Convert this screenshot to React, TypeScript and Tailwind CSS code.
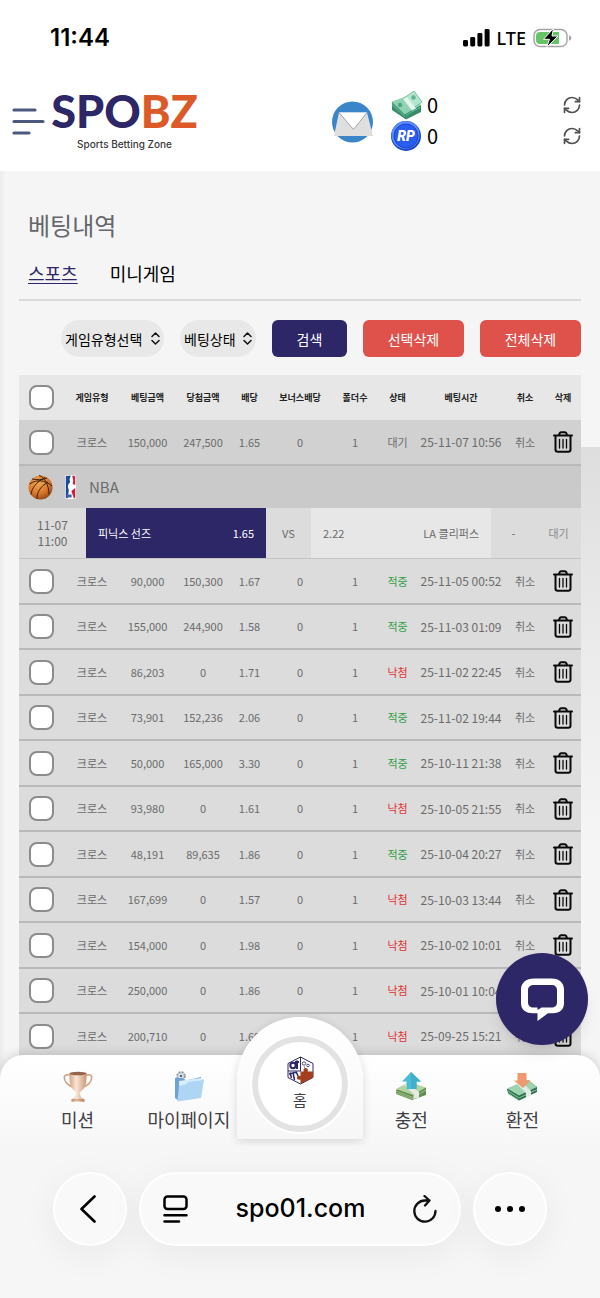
import type { ReactNode } from 'react';
import { RefreshCw } from 'lucide-react';

type Bet = {
  stake: string;
  payout: string;
  odds: string;
  status: '대기' | '적중' | '낙첨';
  time: string;
};

const pendingBet: Bet = { stake: '150,000', payout: '247,500', odds: '1.65', status: '대기', time: '25-11-07 10:56' };

const bets: Bet[] = [
  { stake: '90,000', payout: '150,300', odds: '1.67', status: '적중', time: '25-11-05 00:52' },
  { stake: '155,000', payout: '244,900', odds: '1.58', status: '적중', time: '25-11-03 01:09' },
  { stake: '86,203', payout: '0', odds: '1.71', status: '낙첨', time: '25-11-02 22:45' },
  { stake: '73,901', payout: '152,236', odds: '2.06', status: '적중', time: '25-11-02 19:44' },
  { stake: '50,000', payout: '165,000', odds: '3.30', status: '적중', time: '25-10-11 21:38' },
  { stake: '93,980', payout: '0', odds: '1.61', status: '낙첨', time: '25-10-05 21:55' },
  { stake: '48,191', payout: '89,635', odds: '1.86', status: '적중', time: '25-10-04 20:27' },
  { stake: '167,699', payout: '0', odds: '1.57', status: '낙첨', time: '25-10-03 13:44' },
  { stake: '154,000', payout: '0', odds: '1.98', status: '낙첨', time: '25-10-02 10:01' },
  { stake: '250,000', payout: '0', odds: '1.86', status: '낙첨', time: '25-10-01 10:04' },
  { stake: '200,710', payout: '0', odds: '1.69', status: '낙첨', time: '25-09-25 15:21' },
];

const columns = [
  { title: '게임유형', width: 'w-[56px]' },
  { title: '베팅금액', width: 'w-[55px]' },
  { title: '당첨금액', width: 'w-[56px]' },
  { title: '배당', width: 'w-[37px]' },
  { title: '보너스배당', width: 'w-[64px]' },
  { title: '폴더수', width: 'w-[46px]' },
  { title: '상태', width: 'w-[39px]' },
  { title: '베팅시간', width: 'w-[88px]' },
  { title: '취소', width: 'w-[40px]' },
  { title: '삭제', width: 'w-[36px]' },
];

const statusColor = {
  대기: 'text-[#6b6b6b]',
  적중: 'text-[#2f9e44]',
  낙첨: 'text-[#e03131]',
};

function StatusBar() {
  return (
    <div className="flex h-[72px] shrink-0 items-center justify-between bg-white pt-1 pr-7 pl-[50px] text-black">
      <span className="font-[Inter] text-2xl font-semibold">11:44</span>
      <div className="flex items-center gap-[7px]">
        <svg className="h-[18px] w-[27px]" viewBox="0 0 27 18">
          <rect x="0" y="11" width="5" height="6.5" rx="1.4" />
          <rect x="7.2" y="8" width="5" height="9.5" rx="1.4" />
          <rect x="14.4" y="4" width="5" height="13.5" rx="1.4" />
          <rect x="21.6" y="0" width="5" height="17.5" rx="1.4" />
        </svg>
        <span className="font-['Noto_Sans'] text-lg font-medium">LTE</span>
        <svg className="h-5 w-[39px]" viewBox="0 0 39 20">
          <rect x="1" y="1.5" width="33" height="17" rx="6" fill="#fff" stroke="#a3a3a3" strokeWidth="1.4" />
          <path d="M7 4h19v12H7a4 4 0 0 1-4-4V8a4 4 0 0 1 4-4z" fill="#65c466" />
          <path d="M36 7.2c1.8.6 2.3 1.6 2.3 2.8s-.5 2.200-2.300 2.800z" fill="#a3a3a3" />
          <path d="M20.500.3 10.500 11.300h6l-3 8.400L25 8h-6z" stroke="#fff" strokeWidth="1" />
        </svg>
      </div>
    </div>
  );
}

function MailIcon() {
  return (
    <svg className="h-[42px] w-[42px]" viewBox="0 0 42 42">
      <circle cx="20.500" cy="21" r="20.500" fill="#3a86c8" />
      <path d="M7 11.500h28l6 23.500H2z" fill="#dfdfdf" />
      <path d="M7 11.500h28L21.500 28.500z" fill="#fff" />
      <path d="M7 11.500 21.500 28.500 35 11.500" fill="none" stroke="#8f8f8f" strokeWidth=".8" />
    </svg>
  );
}

function CashIcon() {
  return (
    <svg className="h-[30px] w-8" viewBox="0 0 32 30">
      <path d="M1 15 15 27 30 17v5L15 29.500 1 20z" fill="#3b8a6b" />
      <path d="M1 11.500 19 5 30 15 14 24z" fill="#8fd3b4" />
      <path d="M1 11.500 14 24v3.500L1 16z" fill="#4da682" />
      <path d="M14 24 30 15v4l-16 8.500z" fill="#2f8f67" />
      <path d="m13 8 10-7 8 11-10 7z" fill="#b3e6cd" stroke="#58ad89" strokeWidth=".7" />
      <path d="m12 9 4-2 9 11.500-4 2z" fill="#e3f5ec" />
      <circle cx="22.500" cy="7.500" r="2.200" fill="#5fb591" />
      <circle cx="9" cy="15" r="2.200" fill="#4ea682" />
      <path d="m15 25 14-7.500" stroke="#69bf9a" strokeWidth="1" />
    </svg>
  );
}

function CoinIcon() {
  return (
    <svg className="h-[30px] w-[30px]" viewBox="0 0 30 30">
      <circle cx="15" cy="15" r="15" fill="#1747c9" />
      <circle cx="14.500" cy="14" r="14" fill="#5b8cff" />
      <circle cx="15" cy="15" r="12" fill="#2a5cf0" stroke="#1c45c4" strokeWidth="1" />
      <text x="15" y="20" textAnchor="middle" fontSize="14" fontWeight="900" fontStyle="italic" fontFamily="Roboto, sans-serif" fill="#fff">
        RP
      </text>
    </svg>
  );
}

function Balance({ icon, label }: { icon: ReactNode; label: string }) {
  return (
    <div className="flex h-[31px] items-center">
      <span className="w-9">{icon}</span>
      <span className="flex-1 text-xl text-black">0</span>
      <button aria-label={label}>
        <RefreshCw className="h-5 w-5 text-[#505050]" strokeWidth={2} />
      </button>
    </div>
  );
}

function SiteHeader() {
  return (
    <header className="flex h-[99px] shrink-0 items-start bg-white pr-[18px] pl-3">
      <button aria-label="메뉴" className="mt-9 mr-2">
        <svg className="h-7 w-[33px]" viewBox="0 0 33 28" stroke="#4d587f" strokeWidth="3.200" strokeLinecap="round">
          <path d="M2 2h21M2 13.500h29M2 25h15" />
        </svg>
      </button>
      <a href="#home" className="flex w-[143px] flex-col items-center pt-3">
        <span className="font-[Lato] text-[45px] leading-[54px] font-black text-[#2d2667]">
          SPO<span className="text-[#dc5a28]">BZ</span>
        </span>
        <span className="font-[Inter] text-[10px] leading-3 font-medium text-[#3a3a3a]">Sports Betting Zone</span>
      </a>
      <div className="ml-auto flex w-[250px] items-start pt-[17px]">
        <button aria-label="쪽지" className="mt-3 mr-[17px]">
          <MailIcon />
        </button>
        <div className="flex-1">
          <Balance icon={<CashIcon />} label="캐시 새로고침" />
          <Balance icon={<CoinIcon />} label="포인트 새로고침" />
        </div>
      </div>
    </header>
  );
}

function FilterSelect({ label, className }: { label: string; className: string }) {
  return (
    <div className={`relative ${className}`}>
      <select aria-label={label} className="h-full w-full appearance-none rounded-full bg-[#e8e8e8] pl-1 text-sm text-black">
        <option>{label}</option>
      </select>
      <svg className="pointer-events-none absolute top-3 right-1 h-[13px] w-[9px]" viewBox="0 0 9 13" fill="none" stroke="#111" strokeWidth="1.500" strokeLinecap="round" strokeLinejoin="round">
        <path d="M1 4.500 4.500 1 8 4.500M1 8.500 4.500 12 8 8.500" />
      </svg>
    </div>
  );
}

function CheckBox({ label }: { label: string }) {
  return (
    <input
      type="checkbox"
      aria-label={label}
      className="mx-auto block h-[25px] w-[25px] appearance-none rounded-lg border-2 border-[#8c8c8c] bg-white"
    />
  );
}

function TrashIcon() {
  return (
    <svg className="h-[22px] w-5" viewBox="0 0 20 22" fill="none" stroke="#0a0a0a" strokeWidth="2" strokeLinecap="round" strokeLinejoin="round">
      <path d="M1 4.500h18M2.500 5v13.500c0 1.500.8 2.300 2.200 2.300h10.600c1.400 0 2.200-.8 2.200-2.300V5M6 4.300c.3-2 .8-3 2.300-3h3.400c1.500 0 2 1 2.300 3" />
      <path d="M6.500 8.500v8.500M10 8.500v8.500M13.500 8.500v8.500" strokeWidth="1.300" />
    </svg>
  );
}

function BetRow({ bet, className }: { bet: Bet; className: string }) {
  const cells = ['크로스', bet.stake, bet.payout, bet.odds, '0', '1'];

  return (
    <tr className={`${className} text-[11px] text-[#6b6b6b]`}>
      <td className="border-b-2 border-[#b9b9b9]">
        <CheckBox label={`${bet.time} 선택`} />
      </td>
      {cells.map((cell, i) => (
        <td key={i} className="border-b-2 border-[#b9b9b9]">{cell}</td>
      ))}
      <td className={`border-b-2 border-[#b9b9b9] ${statusColor[bet.status]}`}>{bet.status}</td>
      <td className="border-b-2 border-[#b9b9b9] text-xs whitespace-nowrap">{bet.time}</td>
      <td className="border-b-2 border-[#b9b9b9]">
        <button>취소</button>
      </td>
      <td className="border-b-2 border-[#b9b9b9]">
        <button aria-label="삭제" className="block mx-auto">
          <TrashIcon />
        </button>
      </td>
    </tr>
  );
}

function LeagueRow() {
  return (
    <tr>
      <td colSpan={11} className="bg-[#cacaca]">
        <div className="flex h-[42px] items-center pl-[9px]">
          <svg className="h-[25px] w-[25px]" viewBox="0 0 25 25">
            <defs>
              <radialGradient id="ball" cx=".4" cy=".3" r=".75">
                <stop offset="0" stopColor="#f3a552" />
                <stop offset=".6" stopColor="#d8792b" />
                <stop offset="1" stopColor="#8f4414" />
              </radialGradient>
            </defs>
            <circle cx="12.500" cy="12.500" r="12" fill="url(#ball)" />
            <path d="M1.500 9C9 4 17 5 24 11M11 .5c5 1 10 9 10 19M4 4c5 1 10 1 15-1M3 19.500c1-7 5-12 14-17M9 24c0-7 3-12 11-17" fill="none" stroke="#3a2010" strokeWidth="1" />
          </svg>
          <svg className="ml-3 h-6 w-[11px]" viewBox="0 0 10 24" preserveAspectRatio="none">
            <rect width="10" height="24" rx="2" fill="#fff" />
            <path d="M2 .7h3.500C4 3 3.800 5 4.800 7 2.500 9 2 12 3.500 15L2.500 23.300H2A1.300 1.300 0 0 1 .7 22V2A1.300 1.300 0 0 1 2 .7z" fill="#1f4a9c" />
            <path d="M6.500.7H8A1.300 1.300 0 0 1 9.300 2v8L7 9l.5-4zM9.300 13v9A1.300 1.300 0 0 1 8 23.300L5.800 16z" fill="#cf2239" />
            <path d="M1.500 19.500h4.500v3H1.500z" fill="#3f63ab" />
          </svg>
          <span className="ml-[13px] text-[15px] text-[#6b6b6b]">NBA</span>
        </div>
      </td>
    </tr>
  );
}

function MatchRow() {
  return (
    <tr>
      <td colSpan={11} className="border-b border-[#c4c4c4]">
        <div className="flex h-[50px] items-stretch text-[11px] text-[#6b6b6b]">
          <div className="flex w-[67px] items-center justify-center text-xs leading-4">
            11-07
            <br />
            11:00
          </div>
          <div className="flex flex-1 items-center justify-between bg-[#2d2667] px-3 text-white">
            <span>피닉스 선즈</span>
            <span>1.65</span>
          </div>
          <div className="flex w-[45px] items-center justify-center">VS</div>
          <div className="flex flex-1 items-center justify-between bg-[#e7e7e7] px-3">
            <span>2.22</span>
            <span>LA 클리퍼스</span>
          </div>
          <div className="flex w-[45px] items-center justify-center">-</div>
          <div className="flex w-[45px] items-center justify-center text-[#8a8a8a]">대기</div>
        </div>
      </td>
    </tr>
  );
}

function BetTable() {
  return (
    <table className="mt-[18px] w-full table-fixed border-separate border-spacing-0 text-center">
      <thead>
        <tr className="h-[45px] bg-[#e7e7e7] text-[9px] text-[#222]">
          <th className="w-[45px]">
            <CheckBox label="전체 선택" />
          </th>
          {columns.map((col) => (
            <th key={col.title} className={`${col.width} font-bold whitespace-nowrap`}>{col.title}</th>
          ))}
        </tr>
      </thead>
      <tbody className="bg-[#dcdcdc]">
        <BetRow bet={pendingBet} className="h-[46px] bg-[#d1d1d1]" />
        <LeagueRow />
        <MatchRow />
      </tbody>
      <tbody className="bg-[#dcdcdc]">
        {bets.map((bet) => (
          <BetRow key={bet.time} bet={bet} className="odd:h-[46px] even:h-[45px]" />
        ))}
      </tbody>
    </table>
  );
}

function TrophyIcon() {
  return (
    <svg className="h-[31px] w-[30px]" viewBox="0 0 30 31">
      <defs>
        <linearGradient id="cup">
          <stop offset="0" stopColor="#d3a685" />
          <stop offset=".4" stopColor="#fae6d5" />
          <stop offset="1" stopColor="#c99675" />
        </linearGradient>
      </defs>
      <path d="M8 4.500C4 3 1 4 1.300 7c.4 4 4 8 9.200 9M22 4.500c4-1.500 7-.5 6.700 2.500-.4 4-4 8-9.200 9" fill="none" stroke="#cfa384" strokeWidth="1.600" />
      <path d="M6.500 2h17c.5 9-1 16-6 18.500l-1 3.500h-3l-1-3.500C7.500 18 6 11 6.500 2z" fill="url(#cup)" />
      <ellipse cx="15" cy="2.500" rx="8.500" ry="1.800" fill="#96644a" />
      <path d="M13 23h4l1 3.500 3.500 2V31h-13v-2.500l3.500-2z" fill="url(#cup)" />
      <path d="M8.500 29h13" stroke="#a36f4b" strokeWidth=".8" />
    </svg>
  );
}

function FolderIcon() {
  return (
    <svg className="h-[31px] w-[30px]" viewBox="0 0 30 31">
      <circle cx="7" cy="5" r="3.800" fill="#e3e8ec" stroke="#8d9aa5" strokeWidth="2" strokeDasharray="2 1" />
      <circle cx="7" cy="5" r="1.300" fill="#5d6b77" />
      <path d="M1 7h8l3 2.500L27 6v8L5 30 1 27z" fill="#6ea3d2" />
      <path d="m5 10 22-3v9L5 28z" fill="#d9ecfa" />
      <path d="M5 14.500 12 13l2-2.500 16-2-3 18.500L3.500 30.500z" fill="#aed5f3" />
      <path d="M5 14.500 12 13l2-2.500 16-2" fill="none" stroke="#d5ebfb" strokeWidth="1" />
    </svg>
  );
}

function DepositIcon() {
  return (
    <svg className="h-[31px] w-[32px]" viewBox="0 0 32 31">
      <path d="M1 19 14 12 31 17v7L17 29 1 23z" fill="#5f8f50" />
      <path d="M1 18 14 11 31 16.500 18 24z" fill="#b4d3a0" />
      <path d="m1 20 17 6.500L31 19M1 22l17 6" fill="none" stroke="#9dc088" strokeWidth="1" />
      <path d="m9 14 4-1.500L24 21v5.500L18.500 28v-5z" fill="#e7e9e4" />
      <path d="M16 1 7 10.500h4.500V18h10v-7.500H26z" fill="#49bcd6" />
      <path d="M16 1v17h5.500v-7.500H26z" fill="#3fb0cc" />
    </svg>
  );
}

function WithdrawIcon() {
  return (
    <svg className="h-[31px] w-[32px]" viewBox="0 0 32 31">
      <path d="M1 18 22 9l9 7v5L13 29.500 2 22z" fill="#2f6e4c" />
      <path d="M1 17.500 22 9l9 7L13 24.500z" fill="#9ed3b0" />
      <path d="m2 20 11 7 18-8.500M2 22.500l11 7" fill="none" stroke="#8cc9a1" strokeWidth="1" />
      <path d="m11 13 5-2 9 9v4.500L20 27v-5z" fill="#e3ebe6" />
      <path d="M11.500 2h9v7.500h4L17 17 8 9.500h3.500z" fill="#ee9a6e" />
    </svg>
  );
}

function CubeIcon() {
  return (
    <svg className="h-[29px] w-[27px]" viewBox="0 0 27 29">
      <path d="M13.500 1 26 7.500v14L13.500 28 1 21.500v-14z" fill="#fff" stroke="#2d2667" strokeWidth="1" />
      <path d="M13.500 15.500h3.200c-.6-2 .2-3.500 2-3.500s2.600 1.500 2 3.500H26v6L13.500 28v-4.500c-2 .7-3.600 0-3.600-1.700s1.600-2.500 3.600-1.700z" fill="#a33f1b" />
      <path d="M13.500 1v14M1 15h13" stroke="#2d2667" strokeWidth="1" />
      <path d="M3 16.500 4.500 22M6 16.500l1.500 7.500M9.500 16.500 11 20M2 18l8-2" stroke="#2d2667" strokeWidth="1.500" />
      <circle cx="6" cy="9.500" r="2.700" fill="none" stroke="#2d2667" strokeWidth="2" />
      <path d="M10 4.500v8.500M8 6h4" stroke="#2d2667" strokeWidth="2" />
      <circle cx="17" cy="7.500" r="1.700" fill="none" stroke="#2d2667" strokeWidth=".8" />
      <circle cx="21" cy="9.500" r="1.300" fill="none" stroke="#2d2667" strokeWidth=".8" />
      <circle cx="17.500" cy="11" r=".6" fill="#2d2667" />
    </svg>
  );
}

function NavItem({ icon, label }: { icon: ReactNode; label: string }) {
  return (
    <a href="#menu" className="flex flex-1 flex-col items-center gap-[3px] pt-4 text-lg whitespace-nowrap text-[#3f3f46]">
      {icon}
      {label}
    </a>
  );
}

function BottomNav() {
  return (
    <nav className="relative -mt-6 flex h-[91px] shrink-0 rounded-t-3xl bg-linear-to-b from-white to-[#f7f7f7] px-[22px] shadow-[0_0_12px_rgba(0,0,0,0.18)]">
      <NavItem icon={<TrophyIcon />} label="미션" />
      <NavItem icon={<FolderIcon />} label="마이페이지" />
      <div className="flex-1">
        <a
          href="#home"
          className="absolute bottom-[7px] left-1/2 flex h-[122px] w-[126px] -translate-x-1/2 justify-center rounded-t-full bg-linear-to-b from-white to-[#f7f7f7] pt-[19px] shadow-[0_2px_10px_rgba(0,0,0,0.14)]"
        >
          <span className="flex h-24 w-24 flex-col items-center gap-[3px] rounded-full border-[6px] border-[#e3e3e3] bg-white pt-3.5 text-[15px] leading-6 text-[#3f3f46] outline-2 outline-white">
            <CubeIcon />
            홈
          </span>
        </a>
      </div>
      <NavItem icon={<DepositIcon />} label="충전" />
      <NavItem icon={<WithdrawIcon />} label="환전" />

      <button aria-label="채팅 상담" className="absolute right-3 bottom-[101px] flex h-[92px] w-[92px] items-center justify-center rounded-full bg-[#2d2667] shadow-lg">
        <svg className="h-[43px] w-[43px]" viewBox="0 0 43 43">
          <path
            d="M13 .5h17.500C38.500.5 43 5 43 11.500v13.800c0 6.500-4.500 10-11 10h-5L16.500 43v-7.700H12C5 35.300 0 32 0 25.300V11.500C0 5 5 .5 13 .5zM13 7C9.500 7 7 9 7 12v12.500c0 3 2.300 5 5.500 5h4V32l4-2.500h10c3.300 0 5.500-2 5.500-5V12c0-3-2.200-5-5.500-5z"
            fill="#fff"
            fillRule="evenodd"
          />
        </svg>
      </button>
    </nav>
  );
}

function BrowserBar() {
  return (
    <footer className="relative flex h-[152px] shrink-0 gap-3 bg-[#f6f6f6] px-[53px] pt-[26px] text-black">
      <button aria-label="뒤로" className="flex h-[74px] w-[74px] items-center justify-center rounded-full border-2 border-white bg-[#f9f9f9] shadow-[0_8px_36px_rgba(0,0,0,0.06)]">
        <svg className="-ml-1 h-7 w-4" viewBox="0 0 16 28" fill="none" stroke="currentColor" strokeWidth="2.600" strokeLinecap="round" strokeLinejoin="round">
          <path d="M14.500 1.500 1.500 14l13 12.500" />
        </svg>
      </button>
      <div className="flex h-[74px] flex-1 items-center justify-between rounded-full border-2 border-white bg-[#f9f9f9] px-[22px] shadow-[0_8px_36px_rgba(0,0,0,0.06)]">
        <button aria-label="페이지 메뉴">
          <svg className="h-7 w-[25px]" viewBox="0 0 25 28" fill="none" stroke="currentColor" strokeWidth="2.500" strokeLinecap="round">
            <rect x="1.500" y="1.500" width="22" height="12.500" rx="3" />
            <path d="M1.500 20.300h22M1.500 26.500h14.500" />
          </svg>
        </button>
        <span className="font-[Inter] text-[25px] font-medium">spo01.com</span>
        <button aria-label="새로고침">
          <svg className="h-7 w-6" viewBox="0 0 24 28" fill="none" stroke="#111" strokeWidth="2.300" strokeLinecap="round" strokeLinejoin="round">
            <path d="M22.500 16A10.600 10.600 0 1 1 12 5.500h4.500M11.500 1l5 4.500-4.500 5" />
          </svg>
        </button>
      </div>
      <button aria-label="더보기" className="flex h-[74px] w-[74px] items-center justify-center gap-1.5 rounded-full border-2 border-white bg-[#f9f9f9] shadow-[0_8px_36px_rgba(0,0,0,0.06)]">
        <span className="h-1.5 w-1.5 rounded-full bg-black" />
        <span className="h-1.5 w-1.5 rounded-full bg-black" />
        <span className="h-1.5 w-1.5 rounded-full bg-black" />
      </button>
    </footer>
  );
}

export default function App() {
  return (
    <div className="flex h-screen flex-col overflow-hidden bg-[#f4f4f4] font-['Noto_Sans_CJK_KR',sans-serif]">
      <StatusBar />
      <SiteHeader />
      <main className="relative min-h-0 flex-1 overflow-hidden bg-linear-to-r from-[#ececec] to-[#f5f5f5] to-[6px] px-[19px]">
        {/* faded backdrop showing beside the table */}
        <div className="absolute top-[276px] right-0 h-[400px] w-[19px] bg-linear-to-b from-[#dedede] via-[#ebebeb] to-[#f5f5f5]" />

        <h1 className="pt-9 pl-[9px] text-2xl leading-9 text-[#63666b]">베팅내역</h1>
        <div className="mt-3 flex h-[46px] gap-8 border-b-2 border-[#dadada] pl-[9px] text-lg leading-9">
          <a href="#sports" className="text-[#2d2667] underline underline-offset-2">스포츠</a>
          <a href="#mini" className="text-black">미니게임</a>
        </div>

        <div className="mt-[19px] flex h-[37px] justify-end gap-4">
          <FilterSelect label="게임유형선택" className="w-[103px]" />
          <FilterSelect label="베팅상태" className="w-[76px]" />
          <button className="w-[75px] rounded-md bg-[#2d2667] text-sm text-white">검색</button>
          <button className="w-[101px] rounded-md bg-[#df524b] text-sm text-white">선택삭제</button>
          <button className="w-[101px] rounded-md bg-[#df524b] text-sm text-white">전체삭제</button>
        </div>

        <BetTable />
      </main>
      <BottomNav />
      <BrowserBar />
    </div>
  );
}
